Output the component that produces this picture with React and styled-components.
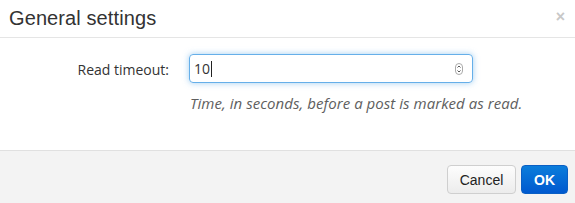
import React from 'react';
import styled, { createGlobalStyle } from 'styled-components';

// +++++++++ CSS +++++++++

const GlobalStyle = createGlobalStyle`
	html, body {
		margin: 0;
		padding: 0;
		background: #fff;
	}
	* { box-sizing: border-box; }
`;

const Dialog = styled.div`
	width: 575px;
	height: 203px;
	display: flex;
	flex-direction: column;
	background: #fff;
	font-family: "Open Sans", sans-serif;
`;

const Header = styled.div`
	height: 38px;
	display: flex;
	align-items: center;
	justify-content: space-between;
	padding: 0 10px 1px 9px;
	border-bottom: 1px solid #e5e5e5;
`;

const Title = styled.h3`
	margin: 0;
	font-family: "Liberation Sans", Arial, sans-serif;
	font-weight: normal;
	font-size: 20px;
	color: #333;
	letter-spacing: 0.1px;
`;

const Close = styled.span`
	font-family: "Liberation Sans", Arial, sans-serif;
	font-weight: bold;
	font-size: 16px;
	color: #c8c8c8;
	margin-top: -3px;
	line-height: 1;
`;

const Body = styled.div`
	flex: 1;
	padding-top: 16px;
`;

const Row = styled.div`
	display: grid;
	grid-template-columns: 169px 284px;
	column-gap: 20px;
	align-items: center;
`;

const Label = styled.label`
	justify-self: end;
	font-size: 14px;
	color: #333;
	padding-top: 1px;
`;

const InputBox = styled.div`
	height: 29px;
	display: flex;
	align-items: center;
	padding: 0 9px 0 4px;
	border: 1px solid #66afe9;
	border-radius: 4px;
	box-shadow: 0 0 6px rgba(102, 175, 233, 0.6);
	font-size: 14px;
	color: #333;
`;

const Value = styled.span`
	flex: 1;
	display: flex;
	align-items: center;
`;

const Caret = styled.span`
	display: inline-block;
	width: 1px;
	height: 16px;
	background: #222;
	margin-left: 1px;
`;

const Spinner = styled.svg`
	width: 8px;
	height: 12px;
	flex: none;
`;

const Help = styled.div`
	grid-column: 2;
	margin-top: 10px;
	padding-left: 1px;
	font-size: 15px;
	font-style: italic;
	letter-spacing: 0.05px;
	color: #5e5e5e;
	white-space: nowrap;
`;

const Footer = styled.div`
	height: 53px;
	border-top: 1px solid #e0e0e0;
	background: #f3f3f3;
	display: flex;
	justify-content: flex-end;
	align-items: flex-start;
	gap: 5px;
	padding: 14px 7px 0 0;
`;

const Button = styled.button`
	height: 29px;
	padding: 0 ${p => (p.primary ? 12 : 11)}px;
	min-width: ${p => (p.primary ? 46 : 69)}px;
	font-family: "Liberation Sans", Arial, sans-serif;
	font-size: 14px;
	font-weight: ${p => (p.primary ? 'bold' : 'normal')};
	border-radius: 4px;
	color: ${p => (p.primary ? '#fff' : '#222')};
	border: 1px solid ${p => (p.primary ? '#0a5fc4' : '#cfcfcf')};
	background: ${p => (p.primary
		? 'linear-gradient(#0b7ddb, #0059cf)'
		: 'linear-gradient(#fdfdfd, #ececec)')};
`;

function App() {
	return (
		<Dialog>
			<GlobalStyle />
			<Header>
				<Title>General settings</Title>
				<Close>×</Close>
			</Header>
			<Body>
				<Row>
					<Label>Read timeout:</Label>
					<InputBox>
						<Value>10<Caret /></Value>
						<Spinner viewBox="0 0 8 12">
							<rect x="0.5" y="0.5" width="7" height="11" rx="3.5" fill="#fff" stroke="#aaa" />
							<path d="M2.5 4.5 L4 3 L5.5 4.5 M2.5 7.5 L4 9 L5.5 7.5" fill="none" stroke="#444" strokeWidth="0.9" />
						</Spinner>
					</InputBox>
					<Help>Time, in seconds, before a post is marked as read.</Help>
				</Row>
			</Body>
			<Footer>
				<Button>Cancel</Button>
				<Button primary>OK</Button>
			</Footer>
		</Dialog>
	);
}

export default App;
